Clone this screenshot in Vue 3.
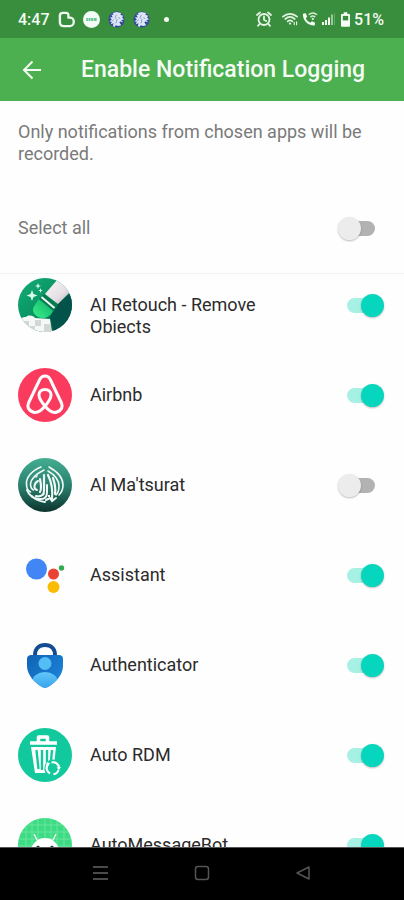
<template>
  <div class="screen">
    <div class="status-bar">
      <div class="status-left">
        <span class="clock">4:47</span>
        <svg class="status-icon" viewBox="0 0 18 18">
          <path d="M5 2h3.500C10 2 11 3 11 4.500V7h2c2 0 3.700 1.800 3.700 4.300S15 16 12.500 16H6C3.500 16 2 14.500 2 12V5c0-2 1-3 3-3z" fill="none" stroke="#eef8ee" stroke-width="2.500" stroke-linejoin="round" />
        </svg>
        <svg class="status-icon" viewBox="0 0 18 18">
          <circle cx="9" cy="9" r="9" fill="#f2fbf5" />
          <path d="M3.500 7.500h2v3h-2zM6 7.500h2v3H6zM8.500 7.500H11v3H8.500zM11.500 7.500h3v3h-3z" fill="#6cc795" />
        </svg>
        <svg v-for="n in 2" :key="n" class="status-icon" viewBox="0 0 18 18">
          <circle cx="9" cy="9" r="8.500" fill="#34479d" />
          <path d="M5 2l4-1 5 1-1 2 3 1-1 2 2 2-3 .5 2 2.500-3-1-1 1 2 3-3 1-3-1-1 2-2-1 1-3-3 1 1-2.500L1.500 11 4 9 2 7l3-.5L3.500 4 6 4z" fill="#dce6f5" />
          <path d="M9 4l-1.500 3 2 2-1 4M11 7l2 1M6 9l-1.500 2" fill="none" stroke="#8595c8" />
        </svg>
        <span class="status-dot"></span>
      </div>
      <div class="status-right">
        <svg class="alarm-icon" viewBox="0 0 16 16" fill="none" stroke="#e4f3e4" stroke-width="1.800" stroke-linecap="round">
          <circle cx="8" cy="8.500" r="5.500" />
          <path d="M8 5.500v3.200l2.200 1.300M1 4l3-2.500M15 4l-3-2.500M3.500 13L2 14.800M12.500 13l1.500 1.800" />
        </svg>
        <svg class="signal-icon" viewBox="0 0 17 16" fill="none" stroke="#e4f3e4" stroke-width="1.800" stroke-linecap="round">
          <path d="M1 5.500c4.500-4 10.500-4 15 0M3.500 8c3-2.700 7-2.700 10 0M6 10.500c1.500-1.300 3.500-1.300 5 0" />
          <circle cx="8.500" cy="12.800" r="1.200" fill="#e4f3e4" stroke="none" />
          <path d="M13 11.500v2.500M15.500 11v3" stroke-width="1.200" />
        </svg>
        <svg class="signal-icon" viewBox="0 0 17 16">
          <path d="M1 2.500L4 2l1.500 3.500L4 7.300c1 2.200 2.500 3.700 4.700 4.700l1.800-1.500L14 12l-.5 3C6.500 15.500.5 9.500 1 2.500z" fill="#f4fbf4" />
          <path d="M7 3.500c2.800-2.400 6.200-2.400 9 0M9 6c1.600-1.400 3.400-1.400 5 0" fill="none" stroke="#d5ecd5" stroke-width="1.600" />
          <circle cx="11.500" cy="8" r="1.200" fill="#d5ecd5" />
        </svg>
        <svg class="bars-icon" viewBox="0 0 13 16" fill="#f4fbf4">
          <path d="M0 11h2v3H0zM3 9h2v5H3zM6 6.500h2V14H6z" />
          <path d="M9 3.500h2V14H9z" fill="#9bcb9d" />
          <path d="M12 2h1v12h-1z" fill="#5fa962" />
        </svg>
        <svg class="battery-icon" viewBox="0 0 10 16">
          <path d="M3 0h4v2h2q1 0 1 1v12q0 1-1 1H1q-1 0-1-1V3q0-1 1-1h2z" fill="#f8fdf8" />
          <path d="M2 4h6v5H2z" fill="#388e3c" />
        </svg>
        <span class="battery-text">51%</span>
      </div>
    </div>

    <header class="app-bar">
      <button class="back-button" aria-label="Back">
        <svg viewBox="0 0 20 20" fill="none" stroke="#f4fbf4" stroke-width="2">
          <path d="M19 10H2.500M10.500 1.500L2 10l8.500 8.500" />
        </svg>
      </button>
      <h1>Enable Notification Logging</h1>
    </header>

    <section class="intro">
      <p>Only notifications from chosen apps will be recorded.</p>
      <label class="select-all">
        <span>Select all</span>
        <input v-model="allSelected" type="checkbox" role="switch" class="switch" />
      </label>
    </section>

    <main class="app-list">
      <label v-for="app in apps" :key="app.id" class="app-row">
        <svg v-if="app.id === 'retouch'" class="app-icon" viewBox="0 0 54 54">
          <defs>
            <linearGradient id="retouch-bg" x1="0" y1="0" x2="1" y2="1">
              <stop offset="0" stop-color="#13ad78" />
              <stop offset=".55" stop-color="#079060" />
              <stop offset="1" stop-color="#033f3a" />
            </linearGradient>
            <linearGradient id="retouch-tip" x1="1" y1="0" x2="0" y2="1">
              <stop offset="0" stop-color="#0dae68" />
              <stop offset="1" stop-color="#3bf08a" />
            </linearGradient>
            <linearGradient id="retouch-barrel" x1="0" y1="0" x2="1" y2="1">
              <stop offset="0" stop-color="#fbf6f8" />
              <stop offset=".6" stop-color="#e4dfe4" />
              <stop offset="1" stop-color="#a9a6ad" />
            </linearGradient>
            <clipPath id="retouch-clip"><circle cx="27" cy="27" r="27" /></clipPath>
          </defs>
          <g clip-path="url(#retouch-clip)">
            <path d="M0 0h54v54H0z" fill="url(#retouch-bg)" />
            <path d="M40 25L54 14v40H36l-4-15z" fill="#04534b" />
            <path d="M0 42c3-1 4-3 8-3 3-3 8-1 9 1l15 1 2 13H0z" fill="#f6f7f7" />
            <path d="M5 43h6v5H5zM11 48h6v6h-6zM17 42h6v6h-6zM26 46h7v8h-7z" fill="#d3d8d7" />
            <path d="M21 21l14 12c-2 4-7 8-11 7-4 0-9-4-9-8 0-3 3-7 6-11z" fill="url(#retouch-tip)" />
            <path d="M26 16l14 11-4 6-15-12z" fill="#08794f" />
            <path d="M23.500 19l13 11" stroke="#f1faf5" stroke-width="2" />
            <path d="M27 16L39 2l15 10-14 14z" fill="url(#retouch-barrel)" />
            <path d="M14 12l1.500 4 4 1.500-4 1.500-1.500 4-1.500-4-4-1.500 4-1.500zM20 5l.8 2.200L23 8l-2.200.8L20 11l-.8-2.200L17 8l2.200-.8zM22.500 10l.6 1.900 1.900.6-1.900.6-.6 1.900-.6-1.900-1.900-.6 1.900-.6z" fill="#d9fbe8" />
          </g>
        </svg>

        <svg v-else-if="app.id === 'airbnb'" class="app-icon" viewBox="0 0 54 54">
          <circle cx="27" cy="27" r="27" fill="#fb3b5d" />
          <path d="M27 38c-4-4.500-6-8-6-11 0-3.500 2.500-5.500 6-5.500s6 2 6 5.500c0 3-2 6.500-6 11zm0 0c-4 5-8 7.500-12 6-4.500-1.700-6-5-4.500-9L21.500 12c1.200-2.700 3-4 5.500-4s4.300 1.300 5.500 4l11 23c1.500 4 0 7.300-4.500 9-4 1.500-8-1-12-6z" fill="none" stroke="#fff" stroke-width="3" stroke-linejoin="round" />
        </svg>

        <svg v-else-if="app.id === 'matsurat'" class="app-icon" viewBox="0 0 54 54">
          <defs>
            <linearGradient id="matsurat-bg" x1="0" y1="0" x2="0" y2="1">
              <stop offset="0" stop-color="#43ae92" />
              <stop offset=".55" stop-color="#287c6b" />
              <stop offset="1" stop-color="#0b332e" />
            </linearGradient>
          </defs>
          <circle cx="27" cy="27" r="27" fill="url(#matsurat-bg)" />
          <g fill="none" stroke="#f0faf6" stroke-width="1.600" stroke-linecap="round">
            <path d="M23 9C13 13 8 20 8.500 26c0 4 2 7 4 8M26 12c-8 4-13 8-13.500 14 0 3 1 5 3 6" />
            <path d="M31 9c9 5 14 11 14 18 0 5-2 8-4 10M30 13c7 4 11 9 11 15 0 4-1 7-3 9" />
            <path d="M26 17v16c0 4-3 6-8 5M30 17c3 6 5 14 4 24M35 20c2 6 3 11 2 16M22 21c1 5 2 10 0 13" stroke-width="2.200" />
            <path d="M20 23c-4 2-5 8-1 9M9 32c2 6 7 9 14 9 4 0 6-2 6-7v-7M14 38c4 5 8 5 13 6M28 42l4-2 2 3 4-3" stroke-width="2" />
          </g>
          <path d="M17 19l2-2 1 1-2 2zM24 37l2-2 1 1-2 2zM30 37h2v2h-2z" fill="#f0faf6" />
        </svg>

        <svg v-else-if="app.id === 'assistant'" class="app-icon" viewBox="0 0 54 54">
          <circle cx="18.500" cy="21" r="10.500" fill="#4285f4" />
          <circle cx="35.500" cy="26" r="5.500" fill="#ea4335" />
          <circle cx="43.500" cy="20" r="2.700" fill="#34a853" />
          <circle cx="35.500" cy="39" r="6" fill="#fbbc05" />
        </svg>

        <svg v-else-if="app.id === 'authenticator'" class="app-icon" viewBox="0 0 54 54">
          <defs>
            <linearGradient id="auth-bg" x1="0" y1="0" x2="1" y2="1">
              <stop offset="0" stop-color="#1160b0" />
              <stop offset="1" stop-color="#1c88df" />
            </linearGradient>
            <linearGradient id="auth-body" x1="0" y1="0" x2="0" y2="1">
              <stop offset="0" stop-color="#62c8fa" />
              <stop offset="1" stop-color="#2d9cea" />
            </linearGradient>
            <clipPath id="auth-clip">
              <path d="M13 17h28c2 0 4 1 4 4v7c0 9-8 17-15 21q-3 1.500-6 0C17 45 9 37 9 28v-7c0-3 2-4 4-4z" />
            </clipPath>
          </defs>
          <path d="M17 20v-3c0-6 4-10 10-10s10 4 10 10v3" fill="none" stroke="#134c91" stroke-width="4" />
          <g clip-path="url(#auth-clip)">
            <path d="M9 12h36v38H9z" fill="url(#auth-bg)" />
            <ellipse cx="27" cy="44" rx="13" ry="10" fill="url(#auth-body)" />
          </g>
          <circle cx="27" cy="25.500" r="6.500" fill="#54bdf5" />
        </svg>

        <svg v-else-if="app.id === 'rdm'" class="app-icon" viewBox="0 0 54 54">
          <circle cx="27" cy="27" r="27" fill="#11c99d" />
          <path d="M12 15h27M20.500 14V9h9v5" fill="none" stroke="#fff" stroke-width="3.500" stroke-linejoin="round" />
          <path d="M13 19h25l-1.500 14c-6 0-10 4-10 9l1 3H17z" fill="#fff" />
          <path d="M18.500 22l2 19M24 22v20M29 22v14M34 22L33 33" stroke="#11c99d" stroke-width="2.400" />
          <circle cx="35" cy="40" r="8.500" fill="#11c99d" />
          <path d="M32 45.500c-4-2.500-4.500-6.500-1.500-9.500M33.500 34.500c4-1 7 1.500 7.500 5M40.500 42c-.8 2.500-2.500 4-5 4.200" fill="none" stroke="#fff" stroke-width="2.200" />
          <path d="M28 37.500l1-3.500 3.500 1.500zM38.500 39.500l4.500-.5-2 3z" fill="#fff" />
        </svg>

        <svg v-else class="app-icon" viewBox="0 0 54 54">
          <defs>
            <clipPath id="bot-clip"><circle cx="27" cy="27" r="27" /></clipPath>
          </defs>
          <g clip-path="url(#bot-clip)">
            <path d="M0 0h54v54H0z" fill="#3ddc84" />
            <path d="M8 0v54M14 0v54M20 0v54M27 0v54M33 0v54M39 0v54M46 0v54M0 7h54M0 14h54M0 21h54M0 28h54" stroke="#7be8ab" stroke-width=".7" />
            <path d="M12 36c1-10 7-16 15-16s14 6 15 16z" fill="#fff" />
            <path d="M19 22l-3-6M35 22l3-6" stroke="#e8fbf0" stroke-width="1.500" />
            <circle cx="20" cy="29.500" r="1.800" fill="#163c34" />
            <circle cx="34" cy="29.500" r="1.800" fill="#163c34" />
          </g>
        </svg>

        <span class="app-name">{{ app.name }}</span>
        <input v-model="app.enabled" type="checkbox" role="switch" class="switch" />
      </label>
    </main>

    <nav class="nav-bar">
      <button aria-label="Recent apps">
        <svg viewBox="0 0 16 16" stroke="#4a4a4a" stroke-width="2"><path d="M0 2h15M0 8h15M0 14h15" /></svg>
      </button>
      <button aria-label="Home">
        <svg viewBox="0 0 16 16" fill="none" stroke="#555" stroke-width="1.500"><rect x="1.500" y="1.500" width="13" height="13" rx="2.500" /></svg>
      </button>
      <button aria-label="Back">
        <svg viewBox="0 0 16 16" fill="none" stroke="#555" stroke-width="1.500" stroke-linejoin="round"><path d="M14 2v12L2 8z" /></svg>
      </button>
    </nav>
  </div>
</template>

<script setup>
import { ref, computed } from 'vue';

const apps = ref([
  { id: 'retouch', name: 'AI Retouch - Remove Objects', enabled: true },
  { id: 'airbnb', name: 'Airbnb', enabled: true },
  { id: 'matsurat', name: "Al Ma'tsurat", enabled: false },
  { id: 'assistant', name: 'Assistant', enabled: true },
  { id: 'authenticator', name: 'Authenticator', enabled: true },
  { id: 'rdm', name: 'Auto RDM', enabled: true },
  { id: 'messagebot', name: 'AutoMessageBot', enabled: true }
]);

const allSelected = computed({
  get: () => apps.value.every(app => app.enabled),
  set: (value) => {
    apps.value.forEach(app => {
      app.enabled = value;
    });
  }
});
</script>

<style>
body {
  background-color: #fefefe;
}
</style>

<style scoped>
.screen {
  display: flex;
  flex-direction: column;
  height: 100vh;
  background-color: #fefefe;
  font-family: Roboto, "Liberation Sans", sans-serif;
  color: #2b2b2b;
}

.screen svg {
  display: block;
  flex: none;
}

/* Status bar */
.status-bar {
  display: flex;
  flex: none;
  justify-content: space-between;
  align-items: center;
  height: 38px;
  padding: 0 20px 0 18px;
  background-color: #388e3c;
  color: #f4fbf4;
  font-size: 16px;
  font-weight: 500;
}

.status-left,
.status-right {
  display: flex;
  align-items: center;
}

.status-left {
  gap: 8px;
}

.status-right {
  gap: 4px;
}

.status-icon {
  width: 17px;
  height: 17px;
}

.status-dot {
  width: 5px;
  height: 5px;
  margin-left: 6px;
  border-radius: 50%;
  background-color: #f4fbf4;
}

.alarm-icon {
  width: 16px;
  height: 16px;
  margin-right: 6px;
}

.signal-icon {
  width: 16px;
  height: 16px;
}

.bars-icon {
  width: 13px;
  height: 16px;
}

.battery-icon {
  width: 9px;
  height: 15px;
  margin-left: 2px;
}

/* App bar */
.app-bar {
  display: flex;
  flex: none;
  align-items: center;
  gap: 39px;
  height: 63px;
  padding: 0 22px;
  background-color: #4caf50;
  color: #f4fbf4;
}

.app-bar h1 {
  margin: 0;
  font-size: 23px;
  font-weight: 500;
  white-space: nowrap;
}

.back-button {
  padding: 0;
  border: none;
  background: none;
  cursor: pointer;
}

.back-button svg {
  width: 20px;
  height: 20px;
}

/* Intro */
.intro {
  flex: none;
  padding: 20px 20px 33px 18px;
  border-bottom: 1px solid #f3f3f3;
  color: #7a7a7a;
  font-size: 18px;
  line-height: 22px;
}

.intro p {
  margin: 0 0 51px;
}

.select-all {
  display: flex;
  justify-content: space-between;
  align-items: center;
}

/* App list */
.app-list {
  display: flex;
  flex: 1;
  flex-direction: column;
  gap: 36px;
  min-height: 0;
  padding: 4px 20px 0 18px;
  overflow: hidden;
}

.app-row {
  display: flex;
  flex: none;
  align-items: center;
  height: 54px;
}

.app-icon {
  width: 54px;
  height: 54px;
}

.app-name {
  flex: 1;
  align-self: flex-start;
  max-height: 39px;
  margin: 16px 60px 0 18px;
  overflow: hidden;
  font-size: 18px;
  line-height: 22px;
}

/* Switch */
.switch {
  display: grid;
  flex: none;
  align-items: center;
  width: 46px;
  height: 24px;
  margin: 0;
  appearance: none;
  cursor: pointer;
}

.switch::before,
.switch::after {
  grid-area: 1 / 1;
  content: '';
}

.switch::before {
  justify-self: center;
  width: 28px;
  height: 15px;
  border-radius: 8px;
  background-color: #b2b2b2;
}

.switch::after {
  justify-self: start;
  width: 23px;
  height: 23px;
  border-radius: 50%;
  background-color: #ececec;
  box-shadow: 0 1px 2px rgba(0, 0, 0, 0.25);
}

.switch:checked::before {
  background-color: #a6f1e4;
}

.switch:checked::after {
  justify-self: end;
  background-color: #06d6bd;
}

/* Navigation bar */
.nav-bar {
  display: grid;
  flex: none;
  grid-template-columns: repeat(3, 1fr);
  place-items: center;
  height: 53px;
  padding: 0 51px 2px;
  background-color: #000;
  border-top: 1px solid #555;
  box-sizing: border-box;
}

.nav-bar button {
  padding: 0;
  border: none;
  background: none;
  cursor: pointer;
}

.nav-bar svg {
  width: 16px;
  height: 16px;
}
</style>
